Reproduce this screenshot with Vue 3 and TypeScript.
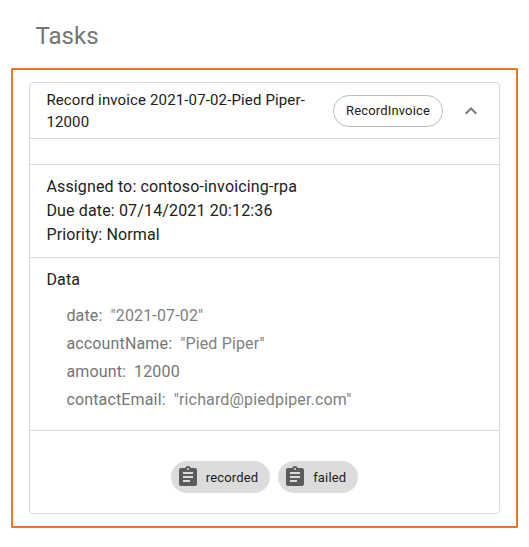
<script setup lang="ts">
interface DataField {
  key: string
  value: string | number
}

const title = 'Record invoice 2021-07-02-Pied Piper-12000'
const taskType = 'RecordInvoice'
const details: string[] = [
  'Assigned to: contoso-invoicing-rpa',
  'Due date: 07/14/2021 20:12:36',
  'Priority: Normal',
]
const fields: DataField[] = [
  { key: 'date', value: '2021-07-02' },
  { key: 'accountName', value: 'Pied Piper' },
  { key: 'amount', value: 12000 },
  { key: 'contactEmail', value: 'richard@piedpiper.com' },
]
const outcomes: string[] = ['recorded', 'failed']
</script>

<template>
  <main class="page">
    <h1 class="heading">Tasks</h1>
    <section class="frame">
      <article class="card">
        <header class="card-header">
          <div class="title">{{ title }}</div>
          <span class="chip outlined">{{ taskType }}</span>
          <button class="toggle" aria-label="Collapse">
            <svg viewBox="0 0 24 24"><path d="M12 8l-6 6 1.41 1.41L12 10.83l4.59 4.58L18 14z" /></svg>
          </button>
        </header>
        <div class="spacer"></div>
        <div class="details">
          <div v-for="line in details" :key="line">{{ line }}</div>
        </div>
        <div class="data">
          <div class="data-title">Data</div>
          <dl class="fields">
            <div v-for="field in fields" :key="field.key" class="field">
              <dt>{{ field.key }}:</dt>
              <dd :class="{ text: typeof field.value === 'string' }">{{ JSON.stringify(field.value) }}</dd>
            </div>
          </dl>
        </div>
        <footer class="actions">
          <button v-for="outcome in outcomes" :key="outcome" class="chip filled">
            <svg viewBox="0 0 24 24"><path d="M19 3h-4.18C14.4 1.84 13.3 1 12 1c-1.3 0-2.4.84-2.82 2H5c-1.1 0-2 .9-2 2v14c0 1.1.9 2 2 2h14c1.1 0 2-.9 2-2V5c0-1.1-.9-2-2-2zm-7 0c.55 0 1 .45 1 1s-.45 1-1 1-1-.45-1-1 .45-1 1-1zm2 14H7v-2h7v2zm3-4H7v-2h10v2zm0-4H7V7h10v2z" /></svg>
            <span>{{ outcome }}</span>
          </button>
        </footer>
      </article>
    </section>
  </main>
</template>

<style>
body {
  margin: 0;
  background: #fff;
}
</style>

<style scoped>
.page {
  box-sizing: border-box;
  width: 529px;
  height: 547px;
  padding: 20px 11px 0;
  font-family: Roboto, sans-serif;
  font-size: 16px;
  letter-spacing: 0.15px;
  color: #212121;
}
.heading {
  margin: 0 0 16px;
  padding-left: 24.4px;
  font-size: 24px;
  font-weight: 400;
  line-height: 32px;
  letter-spacing: 0.05px;
  color: #757575;
}
.frame {
  box-sizing: border-box;
  width: 507px;
  height: 460px;
  padding: 12px 16px;
  border: 2px solid #ee7623;
  border-radius: 1px;
}
.card {
  box-sizing: border-box;
  width: 471px;
  height: 432px;
  border: 1px solid #dadada;
  border-radius: 4px;
}
.card > * + * {
  border-top: 1px solid #dadada;
}
.card-header {
  display: flex;
  align-items: center;
  height: 55px;
  padding: 0 16px 0 16.4px;
}
.title {
  flex: 1;
  margin-right: 16px;
  font-size: 15px;
  line-height: 22px;
  letter-spacing: 0.14px;
}
.chip {
  box-sizing: border-box;
  display: inline-flex;
  align-items: center;
  height: 32px;
  border-radius: 16px;
  font-family: inherit;
  font-size: 13px;
  letter-spacing: 0.15px;
  color: #212121;
}
.outlined {
  padding: 0 12px;
  border: 1px solid #bdbdbd;
}
.toggle {
  margin-left: 16px;
  padding: 0;
  border: 0;
  background: none;
}
.toggle svg {
  display: block;
  width: 24px;
  height: 24px;
  fill: #757575;
}
.spacer {
  height: 25px;
}
.details {
  height: 82px;
  padding: 10px 16.4px 0;
  line-height: 24px;
}
.data {
  height: 162px;
  padding: 10px 16.4px 0;
}
.data-title {
  line-height: 24px;
}
.fields {
  margin: 10px 0 0 20px;
  color: #757575;
}
.field {
  display: flex;
  gap: 8px;
  line-height: 28px;
}
.field dd {
  margin: 0;
}
.field .text {
  color: #808080;
}
.actions {
  display: flex;
  justify-content: center;
  gap: 8px;
  padding-top: 30px;
}
.filled {
  gap: 6px;
  padding: 0 12px 0 5px;
  border: 0;
  background: #dcdcdc;
}
.filled svg {
  width: 24px;
  height: 24px;
  fill: #5c5c5c;
}
</style>
